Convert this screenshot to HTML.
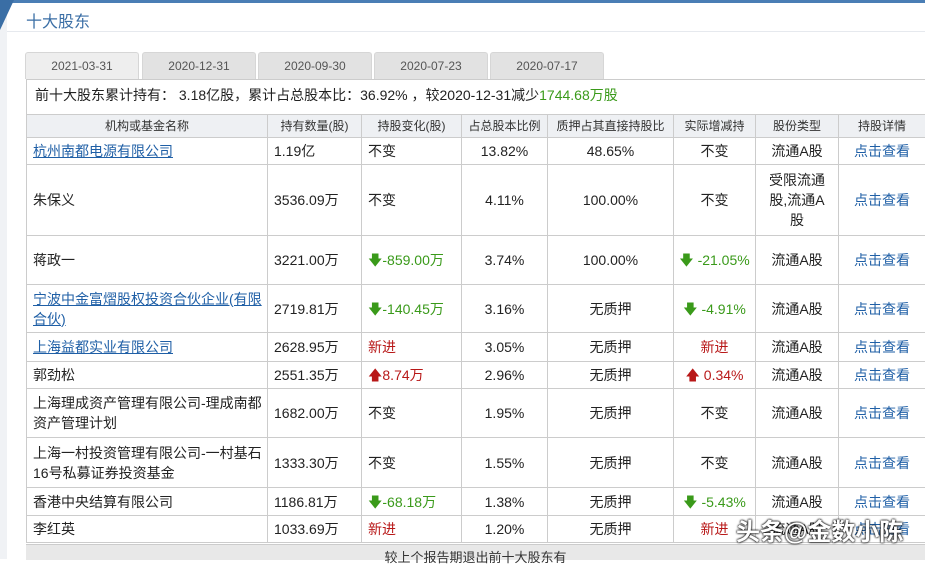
<html><head><style>
body{margin:0;width:925px;height:559px;overflow:hidden;background:#fff;font-family:"Liberation Sans","Noto Sans CJK SC",sans-serif;font-size:14px;color:#333;position:relative}
.top{position:absolute;left:0;top:0;width:925px;height:3px;background:#4a7eb5}
.tri{position:absolute;left:0;top:0;width:0;height:0;border-top:30px solid #3a6ea5;border-right:14px solid transparent}
.side{position:absolute;left:0;top:0;width:7px;height:559px;background:#f0f2f5}
.title{position:absolute;left:26px;top:8px;font-size:16px;color:#3a6ea5}
.hl{position:absolute;left:7px;top:31px;width:918px;height:1px;background:#e6e9ee}
.tab{position:absolute;top:52px;height:26px;width:112px;background:#e2e2e2;border:1px solid #d6d6d6;border-bottom:none;border-radius:3px 3px 0 0;text-align:center;line-height:27px;font-size:12px;color:#555}
.tab.a{background:#eee}
.sum{position:absolute;left:26px;top:79px;width:899px;height:34px;border-top:1px solid #ccc;border-left:1px solid #ccc;line-height:31px;padding-left:8px;font-size:14px;color:#222}
table{position:absolute;left:26px;top:114px;border-collapse:collapse;font-size:14px;color:#222;table-layout:fixed;width:899px}
td{border:1px solid #ccc;padding:0 4px;text-align:center;line-height:20px;overflow:hidden}
td.l{text-align:left;padding-left:6px}
tr.h td{background:#eef0f3;height:23px;font-size:12px;color:#333;white-space:nowrap;padding:0 2px}
.lk{color:#1f5fa6;text-decoration:underline}
.v{color:#1f5fa6}
.g{color:#3a9a1a}.r{color:#b81818}
.ft{position:absolute;left:26px;top:544px;width:899px;height:15px;background:#e8e8e8;border-top:1px solid #ccc;text-align:center;font-size:13px;line-height:26px;color:#333}
.wm{position:absolute;left:736px;top:512px;font-size:24px;color:#fff;text-shadow:0 0 2px #000,0 0 2px #000;font-weight:bold}
</style></head><body>
<div class="side"></div><div class="top"></div><div class="tri"></div><div class="hl"></div>
<div class="title">十大股东</div>
<div class="tab a" style="left:25px">2021-03-31</div>
<div class="tab" style="left:142px">2020-12-31</div>
<div class="tab" style="left:258px">2020-09-30</div>
<div class="tab" style="left:374px">2020-07-23</div>
<div class="tab" style="left:490px">2020-07-17</div>
<div class="sum">前十大股东累计持有： 3.18亿股，累计占总股本比：36.92% ，较2020-12-31减少<span class="g">1744.68万股</span></div>
<table>
<colgroup><col style="width:241px"><col style="width:94px"><col style="width:100px"><col style="width:86px"><col style="width:126px"><col style="width:82px"><col style="width:83px"><col style="width:87px"></colgroup>
<tr class="h"><td>机构或基金名称</td><td>持有数量(股)</td><td>持股变化(股)</td><td>占总股本比例</td><td>质押占其直接持股比</td><td>实际增减持</td><td>股份类型</td><td>持股详情</td></tr>
<tr style="height:27px"><td class="l"><span class="lk">杭州南都电源有限公司</span></td><td class="l">1.19亿</td><td class="l">不变</td><td>13.82%</td><td>48.65%</td><td>不变</td><td>流通A股</td><td class="v">点击查看</td></tr>
<tr style="height:71px"><td class="l">朱保义</td><td class="l">3536.09万</td><td class="l">不变</td><td>4.11%</td><td>100.00%</td><td>不变</td><td style="padding:0 10px">受限流通股,流通A股</td><td class="v">点击查看</td></tr>
<tr style="height:49px"><td class="l">蒋政一</td><td class="l">3221.00万</td><td class="l g">🡇-859.00万</td><td>3.74%</td><td>100.00%</td><td class="g" style="padding:0 4px">🡇&nbsp;-21.05%</td><td>流通A股</td><td class="v">点击查看</td></tr>
<tr style="height:48px"><td class="l"><span class="lk">宁波中金富熠股权投资合伙企业(有限合伙)</span></td><td class="l">2719.81万</td><td class="l g">🡇-140.45万</td><td>3.16%</td><td>无质押</td><td class="g">🡇 -4.91%</td><td>流通A股</td><td class="v">点击查看</td></tr>
<tr style="height:29px"><td class="l"><span class="lk">上海益都实业有限公司</span></td><td class="l">2628.95万</td><td class="l r">新进</td><td>3.05%</td><td>无质押</td><td class="r">新进</td><td>流通A股</td><td class="v">点击查看</td></tr>
<tr style="height:27px"><td class="l">郭劲松</td><td class="l">2551.35万</td><td class="l r">🡅8.74万</td><td>2.96%</td><td>无质押</td><td class="r">🡅 0.34%</td><td>流通A股</td><td class="v">点击查看</td></tr>
<tr style="height:49px"><td class="l">上海理成资产管理有限公司-理成南都资产管理计划</td><td class="l">1682.00万</td><td class="l">不变</td><td>1.95%</td><td>无质押</td><td>不变</td><td>流通A股</td><td class="v">点击查看</td></tr>
<tr style="height:50px"><td class="l">上海一村投资管理有限公司-一村基石16号私募证券投资基金</td><td class="l">1333.30万</td><td class="l">不变</td><td>1.55%</td><td>无质押</td><td>不变</td><td>流通A股</td><td class="v">点击查看</td></tr>
<tr style="height:28px"><td class="l">香港中央结算有限公司</td><td class="l">1186.81万</td><td class="l g">🡇-68.18万</td><td>1.38%</td><td>无质押</td><td class="g">🡇 -5.43%</td><td>流通A股</td><td class="v">点击查看</td></tr>
<tr style="height:27px"><td class="l">李红英</td><td class="l">1033.69万</td><td class="l r">新进</td><td>1.20%</td><td>无质押</td><td class="r">新进</td><td>流通A股</td><td class="v">点击查看</td></tr>
</table>
<div class="ft">较上个报告期退出前十大股东有</div>
<div class="wm">头条@金数小陈</div>
</body></html>
